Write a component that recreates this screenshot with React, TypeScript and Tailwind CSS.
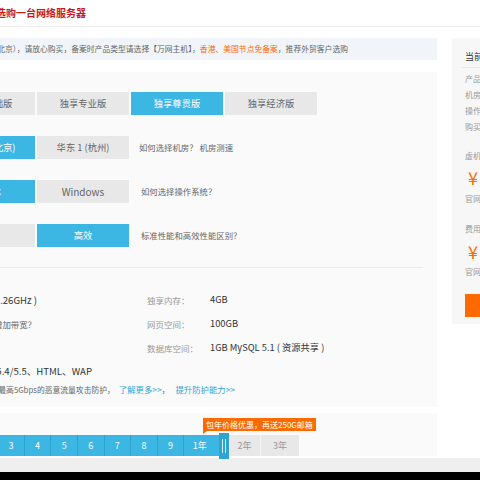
export default function App() {
  const months = ["1", "2", "3", "4", "5", "6", "7", "8", "9"];
  const tabs = ["独享基础版", "独享专业版", "独享尊贵版", "独享经济版"];
  return (
    <div className="w-[480px] h-[480px] overflow-hidden bg-white relative [font-family:'Noto_Sans_CJK_SC',sans-serif] text-[#666]">
      {/* header */}
      <div className="h-[27px] border-b border-[#ececec] flex items-center">
        <span className="ml-[-4px] text-[10px] font-bold text-[#c8161d] leading-none">选购一台网络服务器</span>
      </div>

      <div className="flex items-start ml-[-200px] w-[700px] mt-[11px]">
        {/* left column */}
        <div className="w-[637px] flex flex-col">
          {/* notice */}
          <div className="h-[22px] bg-[#f1f5f9] flex items-center justify-end pr-[89px] whitespace-nowrap text-[7.8px] text-[#666]">
            <span>
              双线BGP机房（华北 2 北京），请放心购买，备案时产品类型请选择【万网主机】，
              <span className="text-[#ff6a00]">香港、美国节点免备案</span>，推荐外贸客户选购
            </span>
          </div>

          {/* main panel */}
          <div className="mt-[12px] bg-[#fafafa] pt-[20px] pb-[11px] pl-[143px] pr-[14px]">
            {/* tabs */}
            <div className="flex gap-[2px]">
              {tabs.map((t, i) => (
                <div
                  key={t}
                  className={
                    i === 2
                      ? "w-[92px] h-[23px] flex items-center justify-center text-[9.3px] bg-[#3cb6e3] text-white whitespace-nowrap"
                      : "w-[92px] h-[23px] flex items-center justify-center text-[9.3px] bg-[#e8e8e8] text-[#666] whitespace-nowrap"
                  }
                >
                  {t}
                </div>
              ))}
            </div>

            {/* region */}
            <div className="mt-[21px] flex items-center">
              <div className="w-[92px] h-[23px] flex items-center justify-center text-[9.3px] bg-[#3cb6e3] text-white whitespace-nowrap">华北 2 (北京)</div>
              <div className="ml-[2px] w-[92px] h-[23px] flex items-center justify-center text-[9.3px] bg-[#e8e8e8] text-[#666] whitespace-nowrap">华东 1 (杭州)</div>
              <span className="ml-[10px] text-[8.4px] text-[#666] whitespace-nowrap">如何选择机房？ 机房测速</span>
            </div>

            {/* os */}
            <div className="mt-[21px] flex items-center">
              <div className="w-[92px] h-[23px] flex items-center justify-center text-[9.3px] bg-[#3cb6e3] text-white whitespace-nowrap">Linux</div>
              <div className="ml-[2px] w-[92px] h-[23px] flex items-center justify-center text-[10px] bg-[#e8e8e8] text-[#666] whitespace-nowrap">Windows</div>
              <span className="ml-[12px] text-[8.4px] text-[#666] whitespace-nowrap">如何选择操作系统？</span>
            </div>

            {/* performance */}
            <div className="mt-[21px] flex items-center">
              <div className="w-[92px] h-[23px] flex items-center justify-center text-[9.3px] bg-[#e8e8e8] text-[#666] whitespace-nowrap">标准</div>
              <div className="ml-[2px] w-[92px] h-[23px] flex items-center justify-center text-[9.3px] bg-[#3cb6e3] text-white whitespace-nowrap">高效</div>
              <span className="ml-[12px] text-[8.4px] text-[#666] whitespace-nowrap">标准性能和高效性能区别？</span>
            </div>

            <div className="mt-[20px] border-t border-[#ebebeb]" />

            {/* specs */}
            <div className="mt-[20px] h-[24px] flex items-center">
              <div className="w-[204px] flex justify-end pr-[110px] whitespace-nowrap text-[9.6px] text-[#333]">
                <span>CPU：双核 Intel Xeon 2.26GHz )</span>
              </div>
              <span className="w-[63px] text-[8.5px] text-[#999] whitespace-nowrap">独享内存：</span>
              <span className="text-[9.3px] text-[#333]">4GB</span>
            </div>
            <div className="h-[24px] flex items-center">
              <div className="w-[204px] flex justify-end pr-[111px] whitespace-nowrap text-[8.4px] text-[#666]">
                <span>如何增加带宽？</span>
              </div>
              <span className="w-[63px] text-[8.5px] text-[#999] whitespace-nowrap">网页空间：</span>
              <span className="text-[9.3px] text-[#333]">100GB</span>
            </div>
            <div className="h-[24px] flex items-center">
              <div className="w-[204px]" />
              <span className="w-[63px] text-[8.5px] text-[#999] whitespace-nowrap">数据库空间：</span>
              <span className="text-[9.3px] text-[#333] whitespace-nowrap">1GB MySQL 5.1 ( 资源共享 )</span>
            </div>
            <div className="h-[22px] flex items-center justify-end pr-[331px] whitespace-nowrap text-[9.6px] text-[#333]">
              <span>支持语言：ASP、PHP 5.2/5.3/5.4/5.5、HTML、WAP</span>
            </div>
            <div className="h-[14px] flex items-center justify-end pr-[188px] whitespace-nowrap text-[7.8px] text-[#666]">
              <span>
                免费提供最高5Gbps的恶意流量攻击防护，
                <span className="ml-[4px] text-[#2aa6dc] text-[8.4px]">了解更多&gt;&gt;</span>，
                <span className="ml-[6px] text-[#2aa6dc] text-[8.4px]">提升防护能力&gt;&gt;</span>
              </span>
            </div>
          </div>

          {/* duration section */}
          <div className="mt-[6px] bg-[#fafafa] pt-[5px] pl-[145px]">
            <div className="ml-[258px] relative w-fit h-[13px] bg-[#ff6a00] text-white text-[8px] leading-[13px] px-[3px] whitespace-nowrap">
              包年价格优惠，再送250G邮箱
              <span className="absolute left-0 bottom-[-3px] w-0 h-0 border-t-[3px] border-t-[#ff6a00] border-r-[4px] border-r-transparent" />
            </div>
            <div className="mt-[4px] h-[21px] flex items-stretch text-[9px]">
              {months.map((m) => (
                <div key={m} className="w-[26.6px] flex items-center justify-center bg-[#3cb6e3] text-white border-r border-[#2fa3d0]">
                  {m}
                </div>
              ))}
              <div className="w-[34.6px] flex items-center justify-center pr-[4px] bg-[#3cb6e3] text-white">1年</div>
              <div className="self-center w-[10px] h-[26px] bg-[#2fa3d2] flex items-center justify-center gap-[2px]">
                <span className="w-[1px] h-[14px] bg-white/80" />
                <span className="w-[1px] h-[14px] bg-white/80" />
              </div>
              <div className="w-[32px] flex items-center justify-center bg-[#e8e8e8] text-[#999] border-r border-[#f4f4f4]">2年</div>
              <div className="w-[38px] flex items-center justify-center bg-[#e8e8e8] text-[#999]">3年</div>
            </div>
          </div>
        </div>

        {/* right column */}
        <div className="ml-[15px] w-[200px] bg-[#f7f7f7] pl-[13px] pt-[8px] pb-[7px] text-[8px] text-[#999] whitespace-nowrap">
          <div className="ml-[-3px] pl-[3px] h-[22px] border-b border-[#e6e6e6] text-[9px] text-[#333] flex items-center">当前配置</div>
          <div className="mt-[3px] h-[16px] flex items-center">产品名称：独享尊贵版</div>
          <div className="h-[16px] flex items-center">机房：华北 2 (北京)</div>
          <div className="h-[16px] flex items-center">操作系统：Linux</div>
          <div className="h-[16px] flex items-center">购买时长：1年</div>
          <div className="mt-[13px] h-[16px] flex items-center">虚机价格：</div>
          <div className="mt-[2px] h-[22px] flex items-center pl-[3px] text-[18px] text-[#ff6a00]">¥ 1880</div>
          <div className="mt-[3px] h-[16px] flex items-center">官网价：¥ 2000</div>
          <div className="mt-[14px] h-[16px] flex items-center">费用合计：</div>
          <div className="mt-[3px] h-[22px] flex items-center pl-[3px] text-[18px] text-[#ff6a00]">¥ 1880</div>
          <div className="mt-[2px] h-[16px] flex items-center">官网价：¥ 2000</div>
          <div className="mt-[14px] h-[23px] w-[150px] bg-[#ff6a00] text-white text-[10px] flex items-center justify-center">立即购买</div>
        </div>
      </div>

      {/* bottom strip */}
      <div className="h-[2px] bg-white" />
      <div className="h-[14px] bg-[#efefef]" />
      <div className="h-[8px] bg-black" />
    </div>
  );
}
